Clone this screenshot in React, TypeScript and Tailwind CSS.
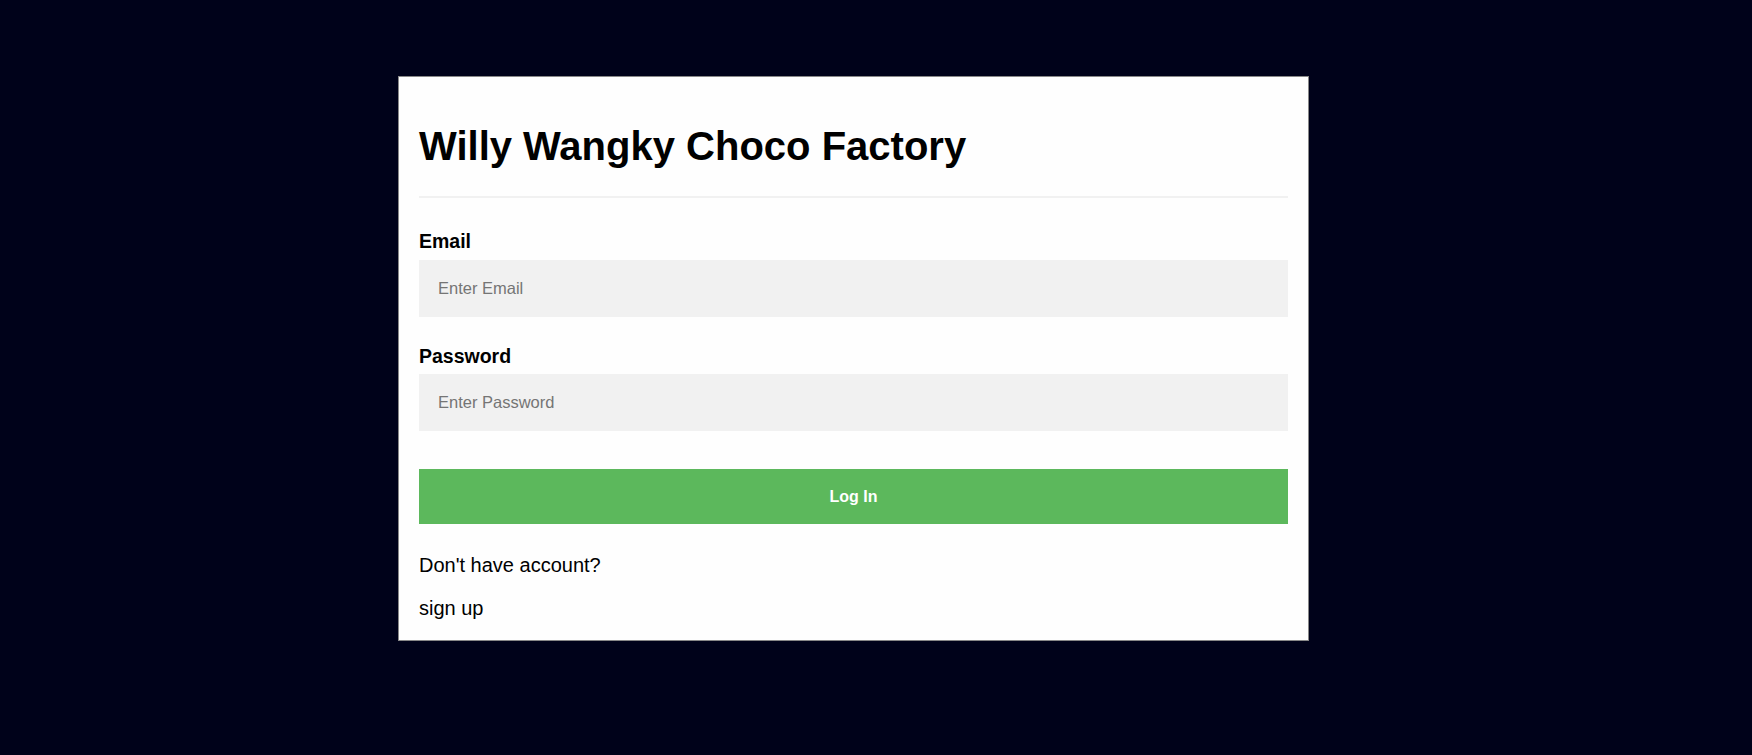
import React from "react";

export default function App() {
  return (
    <div
      className="h-[755px] w-full overflow-hidden bg-[#00021a] pt-[76px]"
      style={{ fontFamily: '"Liberation Sans", Arial, sans-serif' }}
    >
      <div className="ml-[398px] w-[911px] border border-[#888888] bg-[#fefefe] px-[20px] pt-[46px] pb-[20px]">
        <h1 className="text-[40px] leading-[46px] font-bold text-black">
          Willy Wangky Choco Factory
        </h1>
        <hr className="mt-[27px] h-[2px] border-0 bg-[#f1f1f1]" />
        <form className="flex flex-col" onSubmit={(e) => e.preventDefault()}>
          <label className="mt-[32px] text-[19.5px] leading-[22px] font-bold text-black">
            Email
          </label>
          <input
            type="text"
            placeholder="Enter Email"
            className="mt-[8px] h-[57px] w-full bg-[#f1f1f1] px-[19px] text-[16.5px] text-black outline-none placeholder:text-[#757575]"
          />
          <label className="mt-[28px] text-[19.5px] leading-[22px] font-bold text-black">
            Password
          </label>
          <input
            type="password"
            placeholder="Enter Password"
            className="mt-[7px] h-[57px] w-full bg-[#f1f1f1] px-[19px] text-[16.5px] text-black outline-none placeholder:text-[#757575]"
          />
          <button
            type="submit"
            className="mt-[38px] h-[55px] w-full bg-[#5cb85c] text-[16px] font-bold text-white"
          >
            Log In
          </button>
        </form>
        <p className="mt-[30px] text-[20px] leading-[23px] text-black">Don't have account?</p>
        <p className="mt-[20px] text-[20px] leading-[23px] text-black">sign up</p>
      </div>
    </div>
  );
}
